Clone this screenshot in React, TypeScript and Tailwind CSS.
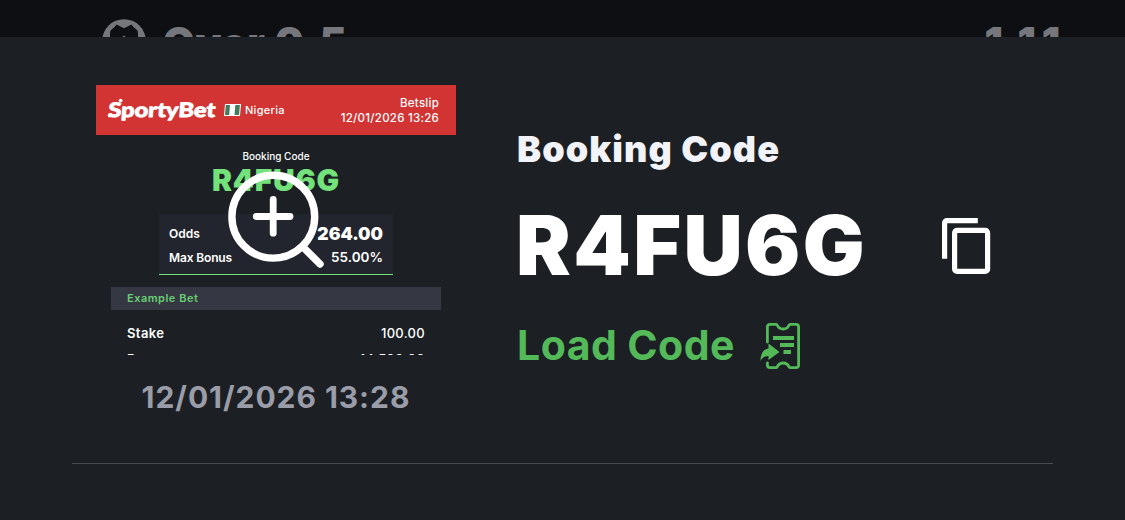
import React from "react";

function BrandLogo() {
  return (
    <svg width="110" height="28" viewBox="0 0 110 28" fill="#fff" aria-label="SportyBet">
      <text x="1.2" y="21.4" fontSize="20" fontWeight="900" fontFamily="Lato, sans-serif" textLength="107" lengthAdjust="spacingAndGlyphs" stroke="#fff" strokeWidth="0.8" strokeLinejoin="round" transform="translate(1.2 0) skewX(-4)">
        SportyBet
      </text>
      <circle cx="13.6" cy="4.6" r="1.9" />
      <circle cx="2.8" cy="19.4" r="2.1" />
    </svg>
  );
}

function NigeriaFlag() {
  return (
    <svg width="17" height="12" viewBox="0 0 17 12">
      <path d="M1 0H17L16 12H0Z" fill="#fff" />
      <path d="M1.8 1H6L5.2 11H1Z M11.3 1H15.9L15.1 11H10.5Z" fill="#3f7d5d" />
    </svg>
  );
}

function ZoomGlyph() {
  return (
    <svg className="absolute left-[128px] top-[82px]" width="104" height="104" viewBox="0 0 104 104" fill="none" stroke="#fff" strokeLinecap="round">
      <circle cx="49.3" cy="49.7" r="41.4" strokeWidth="7.4" />
      <path d="M32.3 49.5H66M49.2 32.5V66.2" strokeWidth="6.8" />
      <path d="M79 80L96 97" strokeWidth="7.4" />
    </svg>
  );
}

function CopyGlyph() {
  return (
    <svg width="50" height="58" viewBox="0 0 50 58" fill="none" stroke="#fff" strokeWidth="5.2">
      <path d="M2.6 41.8V5.9A2.3 2.3 0 0 1 4.9 3.6H35.8" />
      <rect x="12.6" y="13.4" width="33" height="41" rx="2.5" />
    </svg>
  );
}

function LoadGlyph() {
  return (
    <svg className="mt-px" width="42" height="48" viewBox="0 0 42 48" fill="none" stroke="#54b958" strokeWidth="2.8">
      <path d="M7.4 20V5Q7.4 2.4 10 2.4H16.3Q17 2.4 17.3 3.2A6.4 6.4 0 0 0 29 3.2Q29.3 2.4 30 2.4H36Q38.6 2.4 38.6 5V43Q38.6 45.6 36 45.6H30Q29.3 45.6 29 44.8A6.4 6.4 0 0 0 17.3 44.8Q17 45.6 16.3 45.6H10Q7.4 45.6 7.4 43V41" strokeLinecap="round" strokeLinejoin="round" />
      <path d="M13 16H34M20 23H34M23.5 30H31" strokeWidth="3.8" />
      <path d="M8.5 21.5L19.5 30L8.5 38V34C4.5 34 2.5 35.5 .5 39C.5 31.5 3.5 27 8.5 26.5Z" fill="#54b958" stroke="none" />
    </svg>
  );
}

function Ball() {
  return (
    <svg width="44" height="44" viewBox="0 0 44 44">
      <circle cx="22" cy="22" r="21.8" fill="#76777c" />
      <path d="M8 14L8.5 11.5L12.5 8L14.5 5.5L22 9.3L29.5 5.5L31.5 8L35.5 11.5L36 14V30H8Z" fill="#0e0f13" />
      <path d="M18.5 19.5L22 16.5L25.5 19.5Z" fill="#76777c" />
    </svg>
  );
}

export default function App() {
  return (
    <div className="flex h-[520px] w-[1125px] flex-col overflow-hidden bg-[#1c1f24] font-['Inter',sans-serif] text-white">
      <div className="flex h-[37px] shrink-0 items-start justify-between overflow-hidden bg-[#0e0f13] pl-[102px] pr-[61px] text-[41px] leading-[50px] font-black text-[#76777c]">
        <div className="flex gap-[17px] pt-[19px]">
          <Ball />
          <span className="-mt-[2px] tracking-[0.8px]">Over 0.5</span>
        </div>
        <span className="pt-[17px] tracking-[-2.2px] tabular-nums">1.11</span>
      </div>

      <div className="flex h-[426px] shrink-0 pl-24">
        <div className="w-[360px] pt-12">
          <div className="relative h-[270px]">
            <div className="h-full overflow-hidden">
              <div className="flex h-[50px] items-center bg-[#d23434] pl-[11px] pr-[17px]">
                <BrandLogo />
                <div className="ml-[7px] flex items-center gap-1">
                  <NigeriaFlag />
                  <span className="text-[11px] leading-4 font-medium tracking-[0.3px]">Nigeria</span>
                </div>
                <div className="ml-auto pt-px text-right text-[11.5px] leading-[15px] font-medium tracking-[0.25px]">
                  <div>Betslip</div>
                  <div>12/01/2026 13:26</div>
                </div>
              </div>
              <div className="mt-[15px] text-center text-[10px] leading-3 font-medium">Booking Code</div>
              <div className="mt-0.5 text-center text-[30px] leading-8 font-black tracking-[0.8px] text-[#73e27a]">R4FU6G</div>
              <div className="mx-auto mt-[18px] h-[61px] w-[234px] border-b border-[#73e27a] bg-[#22252d] px-[10px] pt-2 font-semibold">
                <div className="flex items-center justify-between leading-6">
                  <span className="text-[12px]">Odds</span>
                  <span className="text-[17.5px] font-black">264.00</span>
                </div>
                <div className="flex items-center justify-between leading-[23px]">
                  <span className="text-[12px] tracking-[-0.15px]">Max Bonus</span>
                  <span className="text-[13.5px] font-semibold">55.00%</span>
                </div>
              </div>
              <div className="mx-[15px] mt-3 h-[23px] bg-[#353843] px-4 text-[11px] leading-[23px] font-semibold tracking-[0.5px] text-[#68cd72]">Example Bet</div>
              <div className="mx-[31px] mt-[11px] text-[13px] leading-6">
                <div className="flex justify-between">
                  <span className="font-semibold tracking-[0.4px]">Stake</span>
                  <span className="font-medium tracking-[0.3px]">100.00</span>
                </div>
                <div className="mt-[2px] flex justify-between">
                  <span className="font-semibold">Bonus</span>
                  <span className="font-medium tracking-[0.4px]">14,520.00</span>
                </div>
              </div>
            </div>
            <ZoomGlyph />
          </div>
          <div className="mt-[22px] text-center text-[30px] leading-10 font-bold tracking-[0.95px] text-[#9a9ca8]">12/01/2026 13:28</div>
        </div>

        <div className="ml-[61px] w-[475px] pt-[87px]">
          <div className="text-[36px] leading-[50px] font-black tracking-[1.1px] text-[#f2f3f8]">Booking Code</div>
          <div className="mt-[22px] flex h-[100px] items-center justify-between">
            <span className="-ml-px text-[82px] leading-[100px] font-black tracking-[2.4px]">R4FU6G</span>
            <CopyGlyph />
          </div>
          <div className="mt-6 flex h-[50px] items-center gap-[25px] text-[#54b958]">
            <span className="text-[41px] leading-[50px] font-bold tracking-[0.45px]">Load Code</span>
            <LoadGlyph />
          </div>
        </div>
      </div>
      <div className="ml-[72px] h-px w-[981px] shrink-0 bg-[#484b50]" />
    </div>
  );
}
